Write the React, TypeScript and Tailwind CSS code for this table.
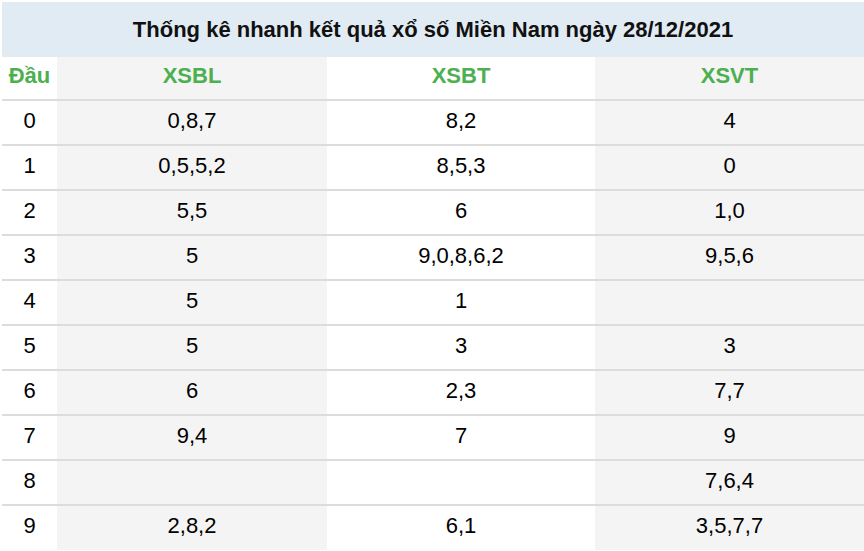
const STATIONS = ['XSBL', 'XSBT', 'XSVT'];

const ROWS: [string, string, string, string][] = [
  ['0', '0,8,7', '8,2', '4'],
  ['1', '0,5,5,2', '8,5,3', '0'],
  ['2', '5,5', '6', '1,0'],
  ['3', '5', '9,0,8,6,2', '9,5,6'],
  ['4', '5', '1', ''],
  ['5', '5', '3', '3'],
  ['6', '6', '2,3', '7,7'],
  ['7', '9,4', '7', '9'],
  ['8', '', '', '7,6,4'],
  ['9', '2,8,2', '6,1', '3,5,7,7'],
];

const App = () => {
  return (
    <div className="w-[864px] h-[551px] bg-white pt-[2px] pl-[2px] font-['Liberation_Sans',Arial,sans-serif] text-[22px] leading-none text-black">
      {/* Title */}
      <div className="h-[55px] bg-[#e1ebf3] flex items-center justify-center font-bold text-[#111]">
        Thống kê nhanh kết quả xổ số Miền Nam ngày 28/12/2021
      </div>

      <table className="w-[862px] border-collapse table-fixed">
        <colgroup>
          <col className="w-[55px]" />
          <col className="w-[270px]" />
          <col className="w-[268px]" />
          <col className="w-[269px]" />
        </colgroup>
        <thead>
          <tr className="h-[43px] border-b-2 border-[#dcdcdc]">
            <th className="p-0 pb-[4px] text-center font-bold text-[#4caf50] bg-white">Đầu</th>
            {STATIONS.map((s, i) => (
              <th
                key={s}
                className={`p-0 pb-[4px] text-center font-bold text-[#4caf50] ${i % 2 === 0 ? 'bg-[#f4f4f4]' : 'bg-white'}`}
              >
                {s}
              </th>
            ))}
          </tr>
        </thead>
        <tbody>
          {ROWS.map((row, r) => (
            <tr
              key={row[0]}
              className={`h-[45px] ${r < ROWS.length - 1 ? 'border-b-2 border-[#dcdcdc]' : ''}`}
            >
              <td className="p-0 pb-[4px] text-center bg-white">{row[0]}</td>
              <td className="p-0 pb-[4px] text-center bg-[#f4f4f4]">{row[1]}</td>
              <td className="p-0 pb-[4px] text-center bg-white">{row[2]}</td>
              <td className="p-0 pb-[4px] text-center bg-[#f4f4f4]">{row[3]}</td>
            </tr>
          ))}
        </tbody>
      </table>
    </div>
  );
};

export default App;
